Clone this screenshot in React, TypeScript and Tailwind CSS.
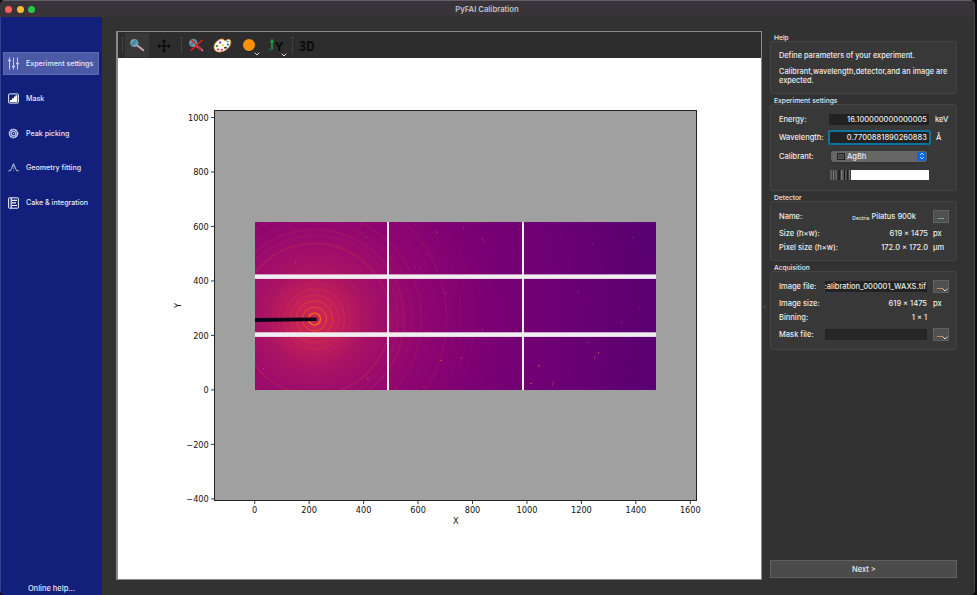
import React from 'react';

const CX = 314.5;
const CY = 319;

const rings: [number, number, number, string][] = [
  [6, 1.2, 0.9, '#f87a12'],
  [12, 1, 0.62, '#f2601d'],
  [18, 1, 0.5, '#ee5525'],
  [24, 0.9, 0.3, '#e84c2f'],
  [30, 0.9, 0.32, '#e84c2f'],
  [36, 0.9, 0.22, '#de403c'],
  [42, 0.9, 0.14, '#de403c'],
  [52, 0.9, 0.08, '#de403c'],
  [75.5, 1.9, 0.32, '#cc3050'],
  [83.5, 1, 0.24, '#cc3050'],
  [89.5, 1.2, 0.3, '#cc3050'],
  [98, 1.2, 0.15, '#cc3050'],
  [107, 1.6, 0.22, '#c02a58'],
  [118, 1.4, 0.1, '#c02a58'],
  [132, 2, 0.2, '#b8265a'],
  [147, 1.7, 0.13, '#b02460'],
  [153, 1.2, 0.1, '#b02460'],
  [160, 1.5, 0.13, '#b02460'],
  [168, 1.2, 0.08, '#a82460'],
  [178, 1.4, 0.08, '#a82460'],
  [186, 1.2, 0.06, '#a82460'],
];

const specks: [number, number, number, number, string][] = [
  [295, 262, 1, 1, '#d06aa8'],
  [366, 237, 1, 1, '#c060b0'],
  [360, 224, 1, 1, '#c8334f'],
  [331, 305, 1, 1, '#f0804a'],
  [353, 287, 1, 1, '#c8508a'],
  [282, 293, 1, 1, '#c8334f'],
  [263, 368, 1, 1, '#d85a60'],
  [367, 378, 2, 1, '#d8404c'],
  [382, 377, 1, 1, '#d8404c'],
  [374, 314, 1, 1, '#500050'],
  [377, 318, 1, 1, '#400040'],
  [385, 325, 1, 1, '#500050'],
  [436, 230, 1, 3, '#b02c5c'],
  [437, 232, 1, 1, '#c03858'],
  [421, 243, 1, 1, '#b02c5c'],
  [426, 254, 1, 1, '#b84080'],
  [415, 267, 1, 1, '#b84080'],
  [420, 267, 1, 1, '#b84080'],
  [463, 227, 1, 2, '#b02c5c'],
  [482, 238, 1, 2, '#b02c5c'],
  [483, 240, 1, 1, '#c03858'],
  [519, 229, 1, 1, '#b03060'],
  [445, 292, 1, 2, '#c03858'],
  [421, 308, 1, 1, '#b02c5c'],
  [440, 360, 2, 1, '#e0503c'],
  [461, 357, 1, 2, '#d04050'],
  [460, 361, 1, 1, '#b02c5c'],
  [452, 341, 1, 1, '#b03060'],
  [482, 329, 1, 2, '#b02c5c'],
  [423, 386, 2, 1, '#c84050'],
  [486, 346, 1, 1, '#b02c5c'],
  [518, 358, 1, 1, '#b02c5c'],
  [493, 374, 1, 1, '#a02a68'],
  [546, 231, 1, 1, '#8c2070'],
  [592, 243, 1, 1, '#a04490'],
  [632, 237, 1, 1, '#a04490'],
  [578, 292, 1, 1, '#b04490'],
  [588, 286, 2, 1, '#80106f'],
  [584, 298, 2, 1, '#80106f'],
  [621, 322, 1, 1, '#a04490'],
  [639, 307, 1, 1, '#8c3090'],
  [535, 296, 2, 1, '#80106f'],
  [587, 342, 2, 1, '#8c3090'],
  [598, 352, 1, 2, '#e0503c'],
  [595, 356, 1, 1, '#c03358'],
  [594, 357, 1, 2, '#b02c5c'],
  [538, 365, 2, 2, '#c03358'],
  [530, 383, 2, 1, '#e0604c'],
  [552, 383, 1, 3, '#b02c5c'],
  [553, 381, 1, 2, '#b02c5c'],
];

const xTicks = [0, 200, 400, 600, 800, 1000, 1200, 1400, 1600];
const yTicks = [-400, -200, 0, 200, 400, 600, 800, 1000];

function Plot() {
  return (
    <svg className="block" width="643" height="521" viewBox="118 58 643 521" fontFamily='"DejaVu Sans", sans-serif' fontSize="8.2" fill="#111">
      <defs>
        <radialGradient id="heat" gradientUnits="userSpaceOnUse" cx={CX} cy={CY} r="345">
          <stop offset="0" stopColor="#cb294f" />
          <stop offset="0.045" stopColor="#c72357" />
          <stop offset="0.09" stopColor="#ba1b5d" />
          <stop offset="0.14" stopColor="#ab1464" />
          <stop offset="0.22" stopColor="#9c0c6c" />
          <stop offset="0.32" stopColor="#8d0571" />
          <stop offset="0.5" stopColor="#7b0074" />
          <stop offset="0.7" stopColor="#6d0074" />
          <stop offset="1" stopColor="#590072" />
        </radialGradient>
        <clipPath id="detector">
          <rect x="255" y="222" width="401" height="168" />
        </clipPath>
      </defs>
      <rect x="118" y="58" width="643" height="521" fill="#fff" />
      <rect x="214.5" y="110.5" width="482" height="390" fill="#a0a0a0" stroke="#222" strokeWidth="1" />
      <g clipPath="url(#detector)">
        <rect x="255" y="222" width="401" height="168" fill="url(#heat)" />
        {rings.map(([r, w, o, c]) => (
          <circle key={r} cx={CX} cy={CY} r={r} fill="none" stroke={c} strokeWidth={w} opacity={o} />
        ))}
        <path d="M255 318L316.7 317.4V321L255 322z" fill="#080318" />
        <path d="M316.7 318h1v3h-1z" fill="#702050" />
        {specks.map(([x, y, w, h, c], i) => (
          <rect key={i} x={x} y={y} width={w} height={h} fill={c} opacity="0.7" />
        ))}
        <g fill="#f0eef0">
          <rect x="387" y="222" width="2" height="168" />
          <rect x="522" y="222" width="2" height="168" />
          <rect x="255" y="274.4" width="401" height="4.5" />
          <rect x="255" y="332.3" width="401" height="4.6" />
        </g>
      </g>
      {xTicks.map((v) => {
        const x = 254.7 + v * 0.27225;
        return (
          <g key={v}>
            <path d={`M${x} 501v3`} stroke="#222" strokeWidth="0.9" />
            <text x={x} y="513.3" textAnchor="middle">{v}</text>
          </g>
        );
      })}
      {yTicks.map((v) => {
        const y = 389.9 - v * 0.2724;
        return (
          <g key={v}>
            <path d={`M214 ${y}h-3`} stroke="#222" strokeWidth="0.9" />
            <text x="208.800" y={y + 3.2} textAnchor="end">{String(v).replace('-', '−')}</text>
          </g>
        );
      })}
      <text x="455.7" y="524.4" textAnchor="middle">X</text>
      <text transform="translate(181 305.5) rotate(-90)" textAnchor="middle">Y</text>
    </svg>
  );
}

function SlidersIcon() {
  return (
    <svg width="11" height="13" viewBox="0 0 11 13" stroke="#c4cce6" fill="none">
      <path d="M1.5 .5v12M5.5 .5v12M9.5 .5v12" strokeWidth="1" />
      <path d="M0 3.5h3M4 9.5h3M8 6.5h3" strokeWidth="1.6" />
    </svg>
  );
}
function MaskIcon() {
  return (
    <svg width="11" height="11" viewBox="0 0 11 11">
      <rect x=".6" y=".9" width="9.8" height="9.2" rx=".8" fill="none" stroke="#eef" strokeWidth="1" />
      <path d="M2 9V7h2V5.2h2V3.5h1.6V2.2H9.3V9z" fill="#fff" />
    </svg>
  );
}
function PeakIcon() {
  return (
    <svg width="11" height="11" viewBox="0 0 11 11" fill="none" stroke="#c9cfea">
      <circle cx="5.5" cy="5.5" r="4" strokeWidth="1.700" strokeDasharray="2.200 .3" />
      <circle cx="5.5" cy="5.5" r="2.2" strokeWidth="1.300" opacity=".85" />
      <circle cx="5.5" cy="5.5" r=".6" fill="#fff" stroke="none" />
    </svg>
  );
}
function FitIcon() {
  return (
    <svg width="11" height="11" viewBox="0 0 11 11" fill="none" stroke="#dde" strokeWidth="1">
      <path d="M.5 9C3 8.8 3.5 7 4.2 4.8S5.2 2 5.5 2s.6.6 1.3 2.8S8 8.8 10.5 9" />
      <path d="M5.5 1.5V9" strokeDasharray="1.2 1" strokeWidth=".7" opacity=".7" />
    </svg>
  );
}
function CakeIcon() {
  return (
    <svg width="11" height="12" viewBox="0 0 11 12" fill="none" stroke="#f2f3fa" strokeWidth="1">
      <rect x=".6" y=".8" width="9.8" height="10.4" rx=".6" />
      <path d="M3.2 1v10" strokeWidth="1.2" />
      <path d="M4 3.3h5M4 5.9h4M4 8.5h5" strokeWidth="1.2" />
    </svg>
  );
}

const nav = [
  { label: 'Experiment settings', icon: <SlidersIcon />, active: true },
  { label: 'Mask', icon: <MaskIcon /> },
  { label: 'Peak picking', icon: <PeakIcon /> },
  { label: 'Geometry fitting', icon: <FitIcon /> },
  { label: 'Cake & integration', icon: <CakeIcon /> },
];

function Magnifier({ crossed = false }: { crossed?: boolean }) {
  return (
    <svg width="17" height="15" viewBox="0 0 17 15">
      <defs>
        <linearGradient id="lens" x1="0" y1="0" x2="1" y2="1">
          <stop offset="0" stopColor="#bdd" />
          <stop offset=".45" stopColor="#2d86a0" />
          <stop offset="1" stopColor="#b4ccd2" />
        </linearGradient>
      </defs>
      <path d="M8.3 7.5l6 4.8" stroke="#c9a5ae" strokeWidth="1.9" strokeLinecap="round" />
      <circle cx="5.3" cy="5" r="3.8" fill="url(#lens)" stroke="#7e9298" strokeWidth=".8" />
      {crossed && <path d="M2.5 13L14.5 1.8M3 1.5l11 11" stroke="#ea1520" strokeWidth="1.5" />}
    </svg>
  );
}

function MoveIcon() {
  return (
    <svg width="14" height="14" viewBox="0 0 14 14" fill="#0b0b0b">
      <path d="M6.3 2h1.4v10H6.300zM2 6.3h10v1.4H2z" />
      <path d="M7 0l2.3 3H4.700zM7 14l2.300-3H4.700zM0 7l3-2.300v4.600zM14 7l-3-2.300v4.600z" />
    </svg>
  );
}

function PaletteIcon() {
  return (
    <svg width="19" height="15" viewBox="0 0 19 15">
      <path d="M1 9.500C.8 5.500 5 1.200 9 1c2-.1 1.700 1.500 3 1.700S14.300.9 16 1.300c2 .5 2 3.500 1.400 5.200C16 10.500 11 14 6.500 14 3 14 1.100 12 1 9.500z" fill="#fffdf5" stroke="#e8922c" strokeWidth=".9" />
      <ellipse cx="7.200" cy="4.500" rx="1.300" ry=".9" fill="#8a2fb5" />
      <ellipse cx="4" cy="8" rx="1.400" ry="1" fill="#239b48" />
      <ellipse cx="5" cy="11.300" rx="1.300" ry=".9" fill="#e02424" />
      <ellipse cx="8.800" cy="11.800" rx="1.300" ry=".9" fill="#c52c91" />
      <ellipse cx="12.500" cy="9.800" rx="1.400" ry="1" fill="#222" />
      <ellipse cx="10" cy="7.200" rx="1.300" ry=".9" fill="#eed51c" />
      <ellipse cx="15" cy="6.500" rx="1.300" ry="1" fill="#2476d2" />
      <ellipse cx="14.500" cy="3.500" rx="1.200" ry=".9" fill="#32b4c8" />
    </svg>
  );
}

function Chevron() {
  return (
    <svg className="block" width="6" height="4" viewBox="0 0 6 4" fill="none" stroke="#ddd" strokeWidth="1">
      <path d="M.7.7L3 3 5.300.7" />
    </svg>
  );
}

function Grip() {
  return <div className="h-4 w-px shrink-0 border-l border-dotted border-[#555]" />;
}

function Toolbar() {
  return (
    <div className="flex h-[26px] shrink-0 items-center bg-[#2d2d2d] pl-[4px]">
      <Grip />
      <div className="ml-[2px] flex h-6 w-6 shrink-0 items-center justify-center bg-[#383838]"><Magnifier /></div>
      <div className="ml-[8px] w-[14px] pt-px"><MoveIcon /></div>
      <div className="ml-[10px]"><Grip /></div>
      <div className="ml-[6px] w-[17px] pt-px"><Magnifier crossed /></div>
      <div className="ml-[8px] w-[19px] pt-px"><PaletteIcon /></div>
      <div className="relative ml-[11px] h-3 w-3 rounded-full bg-[#ff9208]">
        <div className="absolute top-[13px] left-[11px]"><Chevron /></div>
      </div>
      <div className="relative ml-[13px] h-[15px] w-[17px]">
        <svg width="17" height="15" viewBox="0 0 17 15">
          <path d="M4 11.500V4" stroke="#14a848" strokeWidth="1.500" />
          <path d="M4 .5L6.200 4.500H1.800z" fill="#14a848" />
          <path d="M.8 10.500h1.500v2H.8z" stroke="#166c38" fill="none" strokeWidth=".7" />
          <text x="7" y="12.500" fontFamily='"DejaVu Sans", sans-serif' fontSize="11.500" fontWeight="bold" fill="#0c0c0c">Y</text>
        </svg>
        <div className="absolute top-[15px] left-[13px]"><Chevron /></div>
      </div>
      <div className="ml-[7px]"><Grip /></div>
      <div className="ml-[6px] origin-left scale-x-[0.86] pt-px font-['Noto_Sans',sans-serif] text-[14px] leading-none font-bold text-[#0c0c0c]">3D</div>
    </div>
  );
}

function Group({ title, height, className = '', children }: { title: string; height: string; className?: string; children: React.ReactNode }) {
  return (
    <section className={className}>
      <h2 className="h-[9px] pt-[2px] pl-1 text-[6.7px] leading-[8px] font-medium">{title}</h2>
      <div className={`flex flex-col rounded-[3px] border border-[#454545] bg-[#383838] pl-2 ${height}`}>{children}</div>
    </section>
  );
}

function Row({ label, value, unit, h, right = 'w-[28px]' }: { label: string; value?: React.ReactNode; unit?: React.ReactNode; h: string; right?: string }) {
  return (
    <div className={`flex shrink-0 items-center ${h}`}>
      <span className="whitespace-nowrap">{label}</span>
      <div className="ml-auto flex items-center whitespace-nowrap">{value}</div>
      <div className={`flex shrink-0 items-center pl-[5px] ${right}`}>{unit}</div>
    </div>
  );
}

function Dots({ arrow = false }: { arrow?: boolean }) {
  return (
    <div className="relative flex h-[13px] w-4 items-center justify-center border border-[#626262] bg-[#505050] text-[7px] leading-none">
      <span className={arrow ? '-translate-x-px' : ''}>...</span>
      {arrow && <span className="absolute right-0 bottom-0"><Chevron /></span>}
    </div>
  );
}

function Calibrant() {
  return (
    <div className="mr-px flex h-[11px] w-24 items-center rounded-[3px] bg-[#666] pl-[6px] shadow-sm">
      <svg width="8" height="7" viewBox="0 0 8 7">
        <rect x=".5" y=".5" width="7" height="6" fill="#555" stroke="#222" />
        <path d="M2.500 2v3M4.200 2v3M5.600 2v3" stroke="#333" strokeWidth=".6" />
      </svg>
      <span className="ml-[2px] pt-px leading-none">AgBh</span>
      <span className="mr-px ml-auto flex h-[9px] w-[9px] items-center justify-center rounded-[2px] bg-[#0a64e8]">
        <svg width="6" height="8" viewBox="0 0 6 8" fill="none" stroke="#fff" strokeWidth=".9">
          <path d="M1.200 3L3 1.200 4.800 3M1.200 5L3 6.800 4.800 5" />
        </svg>
      </span>
    </div>
  );
}

function Pattern() {
  return (
    <svg width="99" height="10" viewBox="0 0 99 10">
      <rect width="99" height="10" fill="#fff" />
      <rect width="21" height="10" fill="#3a3a3a" />
      <path d="M1 0v10M3.500 0v10M6 0v10M11.500 0v10" stroke="#777" strokeWidth="1.200" />
      <path d="M9 0v10M14.500 0v10M17.200 0v10" stroke="#161616" strokeWidth="1.300" />
      <path d="M13 0v10M16 0v10M19.500 0v10" stroke="#8a8a8a" strokeWidth=".8" />
    </svg>
  );
}

export default function App() {
  return (
    <div className="h-[595px] w-[977px] overflow-hidden bg-[#0b0810] pr-[2px] font-['Inter','Liberation_Sans',sans-serif] text-[7.5px] leading-[9px] font-medium text-[#ececec]">
      <div className="flex h-full flex-col overflow-hidden rounded-[5px] border-r border-r-[#484848] bg-[#323232]">
        <header className="relative flex h-[17px] shrink-0 items-center justify-center border-t border-[#625d66] bg-[#38343a]">
          <div className="absolute left-[5px] flex gap-[4.500px]">
            <i className="h-[7px] w-[7px] rounded-full bg-[#ff5f57]" />
            <i className="h-[7px] w-[7px] rounded-full bg-[#febc2e]" />
            <i className="h-[7px] w-[7px] rounded-full bg-[#28c840]" />
          </div>
          <h1 className="text-[7.7px] font-semibold text-[#c4c2c5]">PyFAI Calibration</h1>
        </header>
        <div className="flex min-h-0 flex-1">
          <nav className="flex w-[102px] shrink-0 flex-col border-l border-[#34408e] bg-[#12207c] pt-[35px] pr-[3px] pl-[2px] text-[7.1px] text-[#e6e8f4]">
            <div className="flex flex-col gap-[11.800px]">
              {nav.map((n) => (
                <div key={n.label} className={`flex h-[23px] items-center ${n.active ? 'border border-[#5a69b0] bg-[#4a5aa6] pl-[4px]' : 'pl-[5px]'}`}>
                  <span className="flex w-[11px] justify-center">{n.icon}</span>
                  <span className="ml-[7px] whitespace-nowrap">{n.label}</span>
                </div>
              ))}
            </div>
            <div className="mt-auto mb-[2px] pl-px text-center text-[7.5px]">Online help...</div>
          </nav>
          <main className="mt-[14px] ml-[14px] flex h-[549px] w-[646px] shrink-0 flex-col border border-l-2 border-[#8a8a8a]">
            <Toolbar />
            <Plot />
          </main>
          <div className="flex w-[8px] shrink-0 items-center">
            <span className="ml-px h-[3px] w-[3px] rounded-full bg-[#474747]" />
          </div>
          <aside className="flex w-[187px] shrink-0 flex-col pt-[15px]">
            <Group title="Help" height="h-[53px]">
              <p className="mt-[9px] text-[7.350px]">Define parameters of your experiment.</p>
              <p className="mt-[7px] text-[7.350px] leading-[9px]">Calibrant,wavelength,detector,and an image are<br />expected.</p>
            </Group>
            <Group title="Experiment settings" height="h-[87px] pt-[5px]" className="mt-px">
              <Row h="h-[18px]" label="Energy:" right="w-[27px]" value={<div className="h-[11px] w-[100px] bg-[#222] pr-[2px] text-right leading-[11px]">16.100000000000005</div>} unit={<span className="pl-[1px]">keV</span>} />
              <Row h="h-[18px]" label="Wavelength:" right="w-[25px]" value={<div className="h-[15px] w-[103px] rounded-[2px] border-2 border-[#08749f] bg-[#222] pr-[2px] text-right leading-[11px]">0.7700881890260883</div>} unit="Å" />
              <Row h="h-[20px]" label="Calibrant:" value={<Calibrant />} />
              <Row h="h-[18px]" label="" right="w-[27px]" value={<Pattern />} />
            </Group>
            <Group title="Detector" height="h-[60px] pt-[5px]" className="mt-px">
              <Row h="h-[19px]" label="Name:" value={<span className="pr-[12px]"><sub className="bottom-[-1px] text-[5px]">Dectris</sub> Pilatus 900k</span>} unit={<Dots />} />
              <Row h="h-[15px]" label="Size (h×w):" value="619 × 1475" unit="px" />
              <Row h="h-[13px]" label="Pixel size (h×w):" value="172.0 × 172.0" unit="μm" />
            </Group>
            <Group title="Acquisition" height="h-[79px] pt-[6px]" className="mt-px">
              <Row h="h-[17px]" label="Image file:" value={<div className="mr-[1px] flex h-[11px] w-[102px] justify-end overflow-hidden bg-[#222] pr-px leading-[11px]">:alibration_000001_WAXS.tif</div>} unit={<Dots arrow />} />
              <Row h="h-[16px]" label="Image size:" value={<span className="pr-px">619 × 1475</span>} unit="px" />
              <Row h="h-[13px]" label="Binning:" value={<span className="pr-px">1 × 1</span>} />
              <Row h="h-[20px]" label="Mask file:" value={<div className="mr-[1px] h-[11px] w-[102px] bg-[#262626]" />} unit={<Dots arrow />} />
            </Group>
            <button className="mt-auto mb-[17px] h-[18px] border border-[#606060] bg-[#4b4b4b] pt-[2px] pl-px text-[7.500px] leading-none">Next &gt;</button>
          </aside>
        </div>
      </div>
    </div>
  );
}
